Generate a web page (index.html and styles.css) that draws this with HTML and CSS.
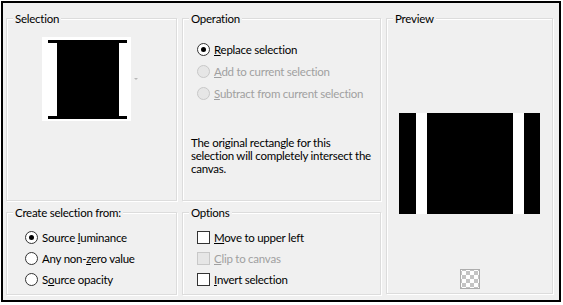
FILE: index.html
```html
<!DOCTYPE html>
<html lang="en">
<head>
    <meta charset="UTF-8">
    <title>Selection from mask</title>
    <link rel="stylesheet" href="styles.css">
</head>
<body>
    <div class="dialog">
        <fieldset class="group group-selection">
            <legend>Selection</legend>
            <div class="thumb-row">
                <svg class="thumb" width="89" height="84" viewBox="0 0 89 84">
                    <rect width="89" height="84" fill="#fff"/>
                    <rect x="6" y="3" width="79" height="3" fill="#000"/>
                    <rect x="6" y="79" width="79" height="3" fill="#000"/>
                    <rect x="15" y="3" width="62" height="79" fill="#000"/>
                </svg>
                <span class="drop-arrow"></span>
            </div>
        </fieldset>

        <fieldset class="group group-operation">
            <legend>Operation</legend>
            <div class="options">
                <label class="choice"><span class="radio checked"></span><span><u>R</u>eplace selection</span></label>
                <label class="choice disabled"><span class="radio"></span><span><u>A</u>dd to current selection</span></label>
                <label class="choice disabled"><span class="radio"></span><span><u>S</u>ubtract from current selection</span></label>
            </div>
            <p class="note">The original rectangle for this selection will completely intersect the canvas.</p>
        </fieldset>

        <fieldset class="group group-preview">
            <legend>Preview</legend>
            <div class="preview-body">
                <svg class="preview" width="141" height="101" viewBox="0 0 141 101">
                    <rect width="141" height="101" fill="#fff"/>
                    <rect x="0" y="0" width="17" height="101" fill="#000"/>
                    <rect x="28" y="0" width="86" height="101" fill="#000"/>
                    <rect x="125" y="0" width="16" height="101" fill="#000"/>
                </svg>
                <span class="checker"></span>
            </div>
        </fieldset>

        <fieldset class="group group-source">
            <legend>Create selection from:</legend>
            <div class="options tight">
                <label class="choice"><span class="radio checked"></span><span>Source <u>l</u>uminance</span></label>
                <label class="choice"><span class="radio"></span><span>Any non-<u>z</u>ero value</span></label>
                <label class="choice"><span class="radio"></span><span>S<u>o</u>urce opacity</span></label>
            </div>
        </fieldset>

        <fieldset class="group group-flags">
            <legend>Options</legend>
            <div class="options tight">
                <label class="choice"><span class="check"></span><span><u>M</u>ove to upper left</span></label>
                <label class="choice disabled"><span class="check"></span><span><u>C</u>lip to canvas</span></label>
                <label class="choice"><span class="check"></span><span><u>I</u>nvert selection</span></label>
            </div>
        </fieldset>
    </div>
</body>
</html>
```

FILE: styles.css
```css
body {
    margin: 0;
    background: #fff;
    font-family: Lato, "Noto Sans", sans-serif;
    font-size: 11.5px;
    letter-spacing: -0.25px;
    color: #000;
}
.dialog {
    margin: 1px;
    border: 2px solid #000;
    background: #f0f0f0;
    display: grid;
    grid-template-columns: 171px 199px 167px;
    grid-template-rows: 190px 90px;
    column-gap: 5px;
    row-gap: 4px;
    padding: 8px 0 0 3px;
    height: 289px;
    width: 553px;
}
.group {
    margin: 0;
    padding: 0;
    min-width: 0;
    border: 1px solid #dcdcdc;
    box-shadow: 1px 1px 0 #fff, inset 1px 1px 0 #fff;
    box-sizing: border-box;
}
.group legend {
    margin-left: 6px;
    padding: 0 2px;
    line-height: 15px;
    background: #f0f0f0;
}
.group-preview {
    grid-column: 3;
    grid-row: 1 / span 2;
    height: 283px;
}
.group-source {
    grid-column: 1;
    grid-row: 2;
}
.group-flags {
    grid-column: 2;
    grid-row: 2;
}
.thumb-row {
    display: flex;
    align-items: center;
    justify-content: center;
    gap: 3px;
    padding-top: 11px;
    padding-right: 4px;
}
.drop-arrow {
    width: 0;
    height: 0;
    border-left: 2px solid transparent;
    border-right: 2px solid transparent;
    border-top: 2px solid #b8b8b8;
}
.options {
    display: flex;
    flex-direction: column;
    gap: 9px;
    padding: 17px 0 0 14px;
}
.options.tight {
    gap: 8px;
    padding: 11px 0 0 14px;
}
.group-source .options {
    padding-left: 18px;
}
.choice {
    display: flex;
    align-items: center;
    gap: 4px;
    height: 13px;
}
.choice.disabled {
    color: #a0a0a0;
}
.radio {
    width: 11px;
    height: 11px;
    border: 1px solid #333;
    border-radius: 50%;
    background: #fff;
    position: relative;
    flex: none;
}
.radio.checked::after {
    content: "";
    position: absolute;
    left: 3px;
    top: 3px;
    width: 5px;
    height: 5px;
    border-radius: 50%;
    background: #000;
}
.disabled .radio {
    border-color: #c8c8c8;
    background: #e6e6e6;
}
.check {
    width: 11px;
    height: 11px;
    border: 1px solid #333;
    background: #fff;
    flex: none;
}
.disabled .check {
    border-color: #c8c8c8;
    background: #e6e6e6;
}
.note {
    margin: 36px 0 0 8px;
    width: 180px;
    line-height: 13px;
}
.preview-body {
    display: flex;
    flex-direction: column;
    align-items: center;
    padding-top: 87px;
}
.preview {
    display: block;
}
.checker {
    margin-top: 55px;
    width: 18px;
    height: 18px;
    border: 1px solid #adadad;
    background-color: #fff;
    background-image: conic-gradient(#c4c4c4 25%, #fff 0 50%, #c4c4c4 0 75%, #fff 0);
    background-size: 8px 8px;
    background-position: 1px 1px;
}
```
